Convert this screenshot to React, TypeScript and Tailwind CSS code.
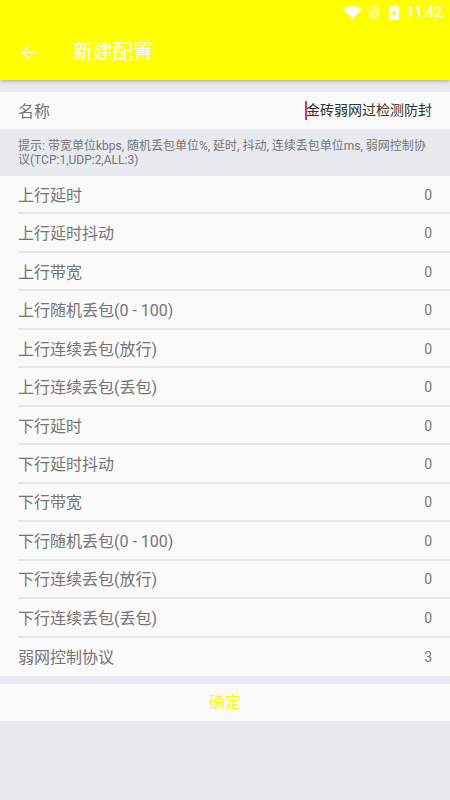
import React from 'react';
import { ArrowLeft } from 'lucide-react';

const rows: [string, string][] = [
  ['上行延时', '0'],
  ['上行延时抖动', '0'],
  ['上行带宽', '0'],
  ['上行随机丢包(0 - 100)', '0'],
  ['上行连续丢包(放行)', '0'],
  ['上行连续丢包(丢包)', '0'],
  ['下行延时', '0'],
  ['下行延时抖动', '0'],
  ['下行带宽', '0'],
  ['下行随机丢包(0 - 100)', '0'],
  ['下行连续丢包(放行)', '0'],
  ['下行连续丢包(丢包)', '0'],
  ['弱网控制协议', '3'],
];

const font = "font-['Roboto','Noto_Sans_CJK_SC',sans-serif]";

const StatusBar: React.FC = () => (
  <div className="h-6 flex items-center justify-end pr-[8px] text-white">
    {/* wifi */}
    <svg width="19" height="13" viewBox="0 0 19 13" className="fill-white">
      <path d="M9.5 13 0 2.8C3 1 6 0 9.5 0S16 1 19 2.8z" />
    </svg>
    {/* no sim */}
    <svg width="12" height="14" viewBox="0 0 12 14" className="ml-[6px] opacity-50">
      <path d="M2 1h6l3 3v9.5H1V2z" fill="white" />
      <path d="M0.5 1 11.5 13.5" stroke="yellow" strokeWidth="1.5" />
    </svg>
    {/* battery charging */}
    <svg width="10" height="15" viewBox="0 0 10 15" className="ml-[9px]">
      <path d="M3 0h4v1.5h3V15H0V1.5h3z" fill="white" />
      <path d="M5.8 3 2.5 8.5h2L3.8 13l3.6-6H5.2z" fill="yellow" />
    </svg>
    <span className="text-[14px] leading-none font-medium ml-[7px]">11:42</span>
  </div>
);

const App: React.FC = () => {
  return (
    <div lang="zh-CN" className={`${font} w-[450px] h-[800px] bg-[#e9eaf0] overflow-hidden`}>
      <header className="h-20 bg-[#ffff00] shadow-[0_1px_4px_rgba(0,0,0,0.3)] relative">
        <StatusBar />
        <div className="h-14 flex items-center pl-[18px]">
          <ArrowLeft size={21} strokeWidth={1.8} className="text-white" />
          <h1 className="ml-[34px] text-[20px] text-white font-normal">新建配置</h1>
        </div>
      </header>

      <div className="mt-3 h-[37px] bg-[#fafafa] flex items-center justify-between pl-[18px] pr-[18px] border-b border-[#f0f0f2] box-content">
        <span className="pt-[2px] text-[16px] text-[#757575]">名称</span>
        <div className="flex items-center">
          <span className="w-[2px] h-[19px] bg-[#ec2a6c] -mr-px" />
          <span className="text-[14px] text-[#333333]">金砖弱网过检测防封</span>
        </div>
      </div>

      <p className="h-[46px] px-[18px] pt-[9px] text-[12px] leading-[14px] text-[#757575]">
        提示: 带宽单位kbps, 随机丢包单位%, 延时, 抖动, 连续丢包单位ms, 弱网控制协议(TCP:1,UDP:2,ALL:3)
      </p>

      <div className="bg-[#fafafa] h-[500px] flex flex-col">
        {rows.map(([label, value], i) => (
          <div key={label} className="flex-1 pl-[18px]">
            <div
              className={`h-full flex items-center justify-between pt-[2px] pr-[18px] ${
                i < rows.length - 1 ? 'border-b-2 border-[#e8e8e8]' : ''
              }`}
            >
              <span className="pt-[1px] text-[16px] text-[#757575]">{label}</span>
              <span className="text-[14px] text-[#757575]">{value}</span>
            </div>
          </div>
        ))}
      </div>

      <button className="mt-2 w-full h-[37px] bg-[#fafafa] flex items-center justify-center text-[16px] text-[#ffff00]">
        确定
      </button>
    </div>
  );
};

export default App;
